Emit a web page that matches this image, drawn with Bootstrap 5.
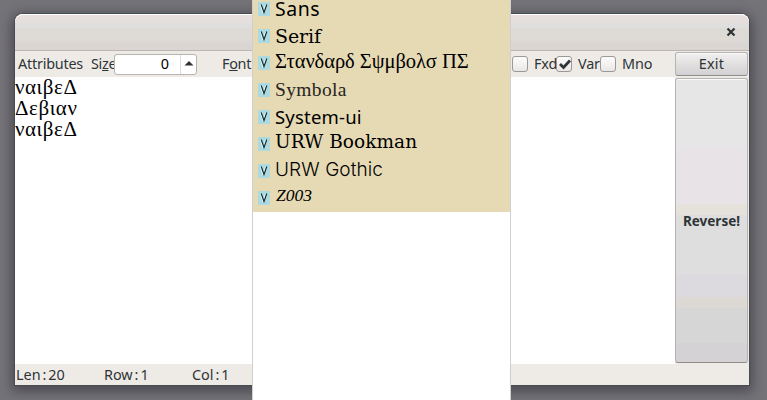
<!DOCTYPE html>
<html lang="en">
<head>
<meta charset="utf-8">
<meta name="viewport" content="width=device-width, initial-scale=1">
<title>Reverse!</title>
<link href="https://cdn.jsdelivr.net/npm/bootstrap@5.3.0/dist/css/bootstrap.min.css" rel="stylesheet">
<style>
html,body{height:400px;overflow:hidden}
body{background:#747378;font-family:"Noto Sans","Open Sans",sans-serif;font-size:14.4px;line-height:20px;color:#2e3436}
.stage{height:400px;padding:14px 18px 15px 15px}
.win{height:371px;border-radius:8px 8px 0 0;background:#eeebe7;box-shadow:0 0 0 1px #484b50,0 3px 12px 3px rgba(40,35,45,.55)}
.titlebar{height:37px;border-radius:8px 8px 0 0;border-bottom:1px solid #bbb6b2;background:linear-gradient(#e8dfde 0,#e6dedd 8px,#dfdede 11px,#dfdee0 13px,#dddad5 15px,#dedad5 25px,#dbd6d3 29px,#dad4d2 36px);box-shadow:inset 0 1px #fff;padding-right:13px}
.tools{height:26px;white-space:nowrap}
.tools>*{flex:none}
.editor{background:#fff;height:287px;color:#000}
.editor div{height:21px;font:21px/20px "Liberation Serif",serif;letter-spacing:.55px}
.side{width:74px;padding:1px 1px 1px 0}
.gbtn{width:73px;border:1px solid #b5b2b0;border-bottom-color:#8f8d8b;border-radius:3px;padding:0;font:inherit;color:#2e3436;box-shadow:inset 0 1px #fafafa}
.exit{height:24px;background:linear-gradient(#f1eff0,#e3e2e1 45%,#d2d0d2);letter-spacing:.2px}
.rev{height:285px;margin-top:2px;font-weight:700;font-size:13.5px;background:linear-gradient(#e6e6e6 0 67px,#e7e3e7 67px 125px,#e5e2dc 125px 136px,#dedede 136px 195px,#dcdade 195px 218px,#dcd9d4 218px 229px,#d6d6d6 229px 264px,#d4d2d5 264px)}
.attributes{width:73px;margin-left:3px;letter-spacing:-.22px}
.size{width:23px;letter-spacing:-.3px}
.spin{width:83px;height:21px;border:1px solid #b6b3b0;border-radius:3px;background:#fff;color:#000;z-index:1}
.spin .num{padding-right:11px;line-height:18px}
.spin .up{width:16px;border-left:1px solid #dedbd8}
.fontlab{width:315px;padding-left:25px;letter-spacing:-.3px}
.tick{width:16px;height:16px;border:1px solid #9b9896;border-radius:3px;background:linear-gradient(#fdfcfd,#e9e6e8);z-index:1}
.lab{width:28px;padding-left:6px;letter-spacing:-.15px}
.lab.last{width:50px}
.status{height:21px;font-size:14.400px;padding-left:1px;word-spacing:-1.800px}
.status span{width:88px}
.popup{left:252px;top:0;width:259px;height:400px;background:#fff;border:solid #cfced0;border-width:0 1px;z-index:2}
.fonts{height:212px;background:#e6dab4;color:#000;overflow:hidden}
.fonts .first{margin-top:-5px}
.f{height:27px;padding-left:5px;font-size:20px;line-height:27px;white-space:nowrap}
.f svg{flex:none;margin-right:5px}
.f-sans{font:19.500px/20px "Noto Sans",sans-serif;letter-spacing:.5px}
.f-serif{font:19px/27px "DejaVu Serif",serif;letter-spacing:-.1px;padding-top:1px}
.f-std{font:20.500px/27px "Liberation Serif",serif;letter-spacing:-.05px;padding-bottom:2px}
.f-symb{font:19.500px/27px "Liberation Serif",serif;letter-spacing:.35px;padding-bottom:1px;color:#26241d}
.f-sys{font:18.500px/27px "Noto Sans",sans-serif;letter-spacing:.2px}
.f-book{font:18.500px/27px "DejaVu Serif",serif;letter-spacing:.05px;padding-bottom:5px}
.f-goth{font:300 19px/27px Inter,sans-serif;letter-spacing:.1px;padding-bottom:3px}
.f-z{font:italic 17.500px/27px "Liberation Serif",serif;padding-bottom:4px;padding-left:1px}
</style>
<script src="https://cdn.jsdelivr.net/npm/bootstrap@5.3.0/dist/js/bootstrap.bundle.min.js"></script>
</head>
<body>
<svg class="d-none"><symbol id="v" viewBox="0 0 12 14"><path d="M0 0h12v14H0z" fill="#addae0"/><path d="M2.500 3l2.500 8M7.500 3L6 8" stroke="#e4ffff" fill="none"/><path d="M3.200 2.500l2.800 8 2.800-8" stroke="#14262b" stroke-width="1.100" fill="none"/></symbol></svg>
<div class="stage">
<div class="win d-flex flex-column">
  <div class="titlebar d-flex align-items-center justify-content-end"><svg width="10" height="10" viewBox="0 0 10 10"><path d="M1.500 1.500l7 7M8.500 1.500l-7 7" stroke="#2e3436" stroke-width="2.200"/></svg></div>
  <div class="d-flex">
    <div class="flex-grow-1">
      <div class="tools d-flex align-items-center">
        <span class="attributes">Attributes</span>
        <span class="size">Si<u>z</u>e</span>
        <div class="spin d-flex"><span class="num flex-grow-1 text-end">0</span><span class="up d-flex justify-content-center"><svg width="10" height="19" viewBox="0 0 10 19"><path d="M.5 10.500L5 6l4.500 4.500z" fill="#2e3436"/></svg></span></div>
        <span class="fontlab">F<u>o</u>nt</span>
        <span class="tick"></span><span class="lab">Fxd</span>
        <span class="tick"><svg class="d-block" width="14" height="14" viewBox="0 0 14 14"><path d="M3 7l3.500 3.500L13 3.500" fill="none" stroke="#2e3436" stroke-width="2.800"/></svg></span><span class="lab">Var</span>
        <span class="tick"></span><span class="lab last">Mno</span>
      </div>
      <div class="editor"><div>ναιβεΔ</div><div>Δεβιαν</div><div>ναιβεΔ</div></div>
    </div>
    <div class="side"><button class="gbtn exit d-block">Exit</button><button class="gbtn rev d-block">Reverse!</button></div>
  </div>
  <div class="status d-flex align-items-center"><span>Len : 20</span><span>Row : 1</span><span>Col : 1</span></div>
</div>
</div>
<div class="popup position-absolute"><div class="fonts">
  <div class="f first d-flex align-items-center"><svg width="12" height="14"><use href="#v"/></svg><span class="f-sans">Sans</span></div>
  <div class="f d-flex align-items-center"><svg width="12" height="14"><use href="#v"/></svg><span class="f-serif">Serif</span></div>
  <div class="f d-flex align-items-center"><svg width="12" height="14"><use href="#v"/></svg><span class="f-std">Στανδαρδ Σψμβολσ ΠΣ</span></div>
  <div class="f d-flex align-items-center"><svg width="12" height="14"><use href="#v"/></svg><span class="f-symb">Symbola</span></div>
  <div class="f d-flex align-items-center"><svg width="12" height="14"><use href="#v"/></svg><span class="f-sys">System-ui</span></div>
  <div class="f d-flex align-items-center"><svg width="12" height="14"><use href="#v"/></svg><span class="f-book">URW Bookman</span></div>
  <div class="f d-flex align-items-center"><svg width="12" height="14"><use href="#v"/></svg><span class="f-goth">URW Gothic</span></div>
  <div class="f d-flex align-items-center"><svg width="12" height="14"><use href="#v"/></svg><span class="f-z">Z003</span></div>
</div></div>
</body>
</html>
